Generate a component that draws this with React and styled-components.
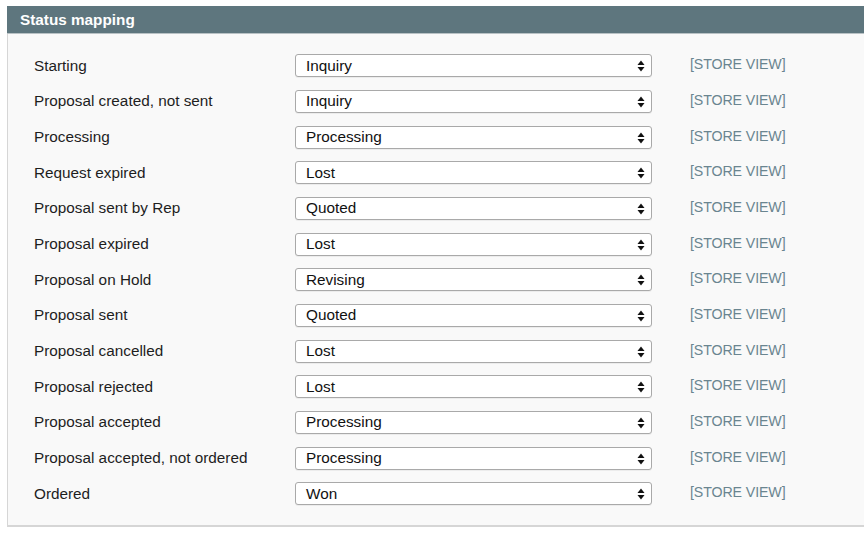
import React from "react";
import styled, { createGlobalStyle } from "styled-components";

const Global = createGlobalStyle`
  html, body {
    margin: 0;
    padding: 0;
    background: #ffffff;
    font-family: "Liberation Sans", Arial, sans-serif;
  }
`;

const Page = styled.div`
  padding: 6px 1px 0 7px;
`;

const Header = styled.div`
  height: 27px;
  background: #5e767e;
  border-bottom: 1px solid #b9c2c5;
  color: #ffffff;
  font-weight: bold;
  font-size: 15.3px;
  display: flex;
  align-items: center;
  padding-left: 13px;
`;

const Panel = styled.div`
  background: #f9f9f9;
  border-left: 1px solid #d6d6d6;
  border-bottom: 2px solid #d6d6d6;
  padding: 14px 0 13px 26px;
  display: grid;
  grid-template-columns: 261px 357px auto;
  grid-auto-rows: 35.67px;
  align-items: center;
`;

const Label = styled.div`
  font-size: 15.3px;
  color: #1e1e1e;
`;

const SelectWrap = styled.div`
  position: relative;
  height: 21px;
  border: 1px solid #a9a9a9;
  border-radius: 3px;
  background: #ffffff;
  box-shadow: 0 1px 0 rgba(0, 0, 0, 0.05);
  display: flex;
  align-items: center;
  padding-left: 10px;
  font-size: 15.3px;
  color: #111;
`;

const Arrows = styled.svg`
  position: absolute;
  right: 6px;
  top: 5px;
`;

const Store = styled.div`
  margin: -3px 0 0 38px;
  font-size: 14.2px;
  color: #6a8590;
  letter-spacing: -0.1px;
`;

const rows = [
  ["Starting", "Inquiry"],
  ["Proposal created, not sent", "Inquiry"],
  ["Processing", "Processing"],
  ["Request expired", "Lost"],
  ["Proposal sent by Rep", "Quoted"],
  ["Proposal expired", "Lost"],
  ["Proposal on Hold", "Revising"],
  ["Proposal sent", "Quoted"],
  ["Proposal cancelled", "Lost"],
  ["Proposal rejected", "Lost"],
  ["Proposal accepted", "Processing"],
  ["Proposal accepted, not ordered", "Processing"],
  ["Ordered", "Won"],
];

const UpDown = () => (
  <Arrows width="8" height="12" viewBox="0 0 8 12">
    <path d="M4 0.5 L7.5 5 L0.5 5 Z" fill="#111" />
    <path d="M4 11.5 L7.5 7 L0.5 7 Z" fill="#111" />
  </Arrows>
);

export default function App() {
  return (
    <>
      <Global />
      <Page>
        <Header>Status mapping</Header>
        <Panel>
          {rows.map(([label, value]) => (
            <React.Fragment key={label}>
              <Label>{label}</Label>
              <SelectWrap>
                {value}
                <UpDown />
              </SelectWrap>
              <Store>[STORE VIEW]</Store>
            </React.Fragment>
          ))}
        </Panel>
      </Page>
    </>
  );
}
